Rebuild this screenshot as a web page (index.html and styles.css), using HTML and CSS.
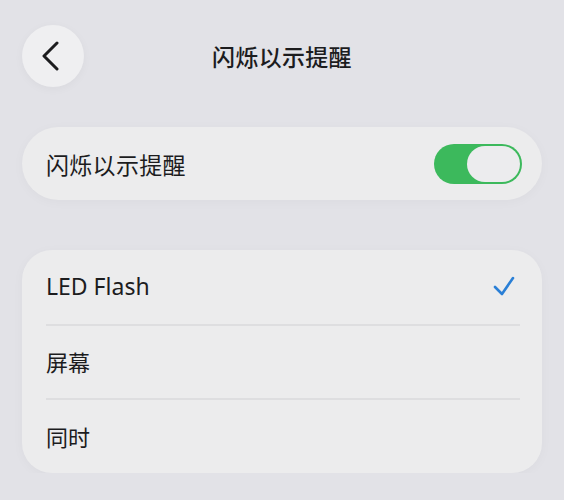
FILE: index.html
```html
<!DOCTYPE html>
<html lang="zh-CN">
<head>
    <meta charset="UTF-8">
    <meta name="viewport" content="width=device-width, initial-scale=1.0">
    <title>闪烁以示提醒</title>
    <link rel="stylesheet" href="styles.css">
</head>
<body>
    <div class="page">
        <header class="navbar">
            <button class="back" aria-label="返回">
                <svg width="20" height="30" viewBox="0 0 20 30">
                    <polyline points="16,2 3,15 16,28" fill="none" stroke="#1c1c1e" stroke-width="3" stroke-linecap="round" stroke-linejoin="round"/>
                </svg>
            </button>
            <h1 class="title">闪烁以示提醒</h1>
            <span></span>
        </header>

        <section class="card switch-card">
            <span class="label">闪烁以示提醒</span>
            <div class="toggle on">
                <div class="knob"></div>
            </div>
        </section>

        <section class="card list">
            <div class="row">
                <span class="label latin">LED Flash</span>
                <svg class="check" width="24" height="22" viewBox="0 0 24 22">
                    <polyline points="3,12 10,19 21,3" fill="none" stroke="#2a7fd6" stroke-width="2.6" stroke-linecap="round" stroke-linejoin="round"/>
                </svg>
            </div>
            <div class="row">
                <span class="label">屏幕</span>
            </div>
            <div class="row">
                <span class="label">同时</span>
            </div>
        </section>
    </div>
</body>
</html>
```

FILE: styles.css
```css
body {
    margin: 0;
    background-color: #e2e2e7;
    font-family: "Noto Sans", "Noto Sans CJK SC", sans-serif;
    color: #1c1c1e;
}
.page {
    padding: 25px 22px 0 22px;
}
.navbar {
    display: grid;
    grid-template-columns: 62px 1fr 62px;
    align-items: center;
    height: 62px;
}
.back {
    width: 62px;
    height: 62px;
    border: none;
    border-radius: 50%;
    background-color: #efeff1;
    box-shadow: 0 2px 10px rgba(0, 0, 0, 0.04);
    display: flex;
    align-items: center;
    justify-content: center;
    padding: 0 4px 0 0;
}
.title {
    margin: 0;
    text-align: center;
    font-size: 23px;
    font-weight: 500;
    letter-spacing: 0.3px;
}
.card {
    background-color: #ececed;
    box-shadow: 0 2px 12px rgba(0, 0, 0, 0.03);
}
.label {
    font-size: 22px;
}
.label.latin {
    font-size: 23px;
}
.switch-card {
    margin-top: 40px;
    height: 73px;
    border-radius: 37px;
    display: flex;
    align-items: center;
    justify-content: space-between;
    padding: 0 20px 0 24px;
}
.switch-card .label {
    font-size: 23px;
    letter-spacing: 0.3px;
}
.toggle {
    width: 88px;
    height: 40px;
    border-radius: 20px;
    background-color: #e5e5ea;
    position: relative;
}
.toggle.on {
    background-color: #3cb95c;
}
.knob {
    position: absolute;
    top: 2px;
    left: 2px;
    width: 53px;
    height: 36px;
    border-radius: 18px;
    background-color: #ececee;
}
.toggle.on .knob {
    left: auto;
    right: 2px;
}
.list {
    margin-top: 50px;
    border-radius: 30px;
    padding: 0 22px 0 24px;
}
.row {
    box-sizing: border-box;
    height: 74px;
    display: flex;
    align-items: center;
    justify-content: space-between;
    padding-bottom: 2px;
}
.row + .row {
    border-top: 2px solid #dedee0;
}
.row:last-child {
    height: 75px;
}
.check {
    margin-right: 4px;
}
```
